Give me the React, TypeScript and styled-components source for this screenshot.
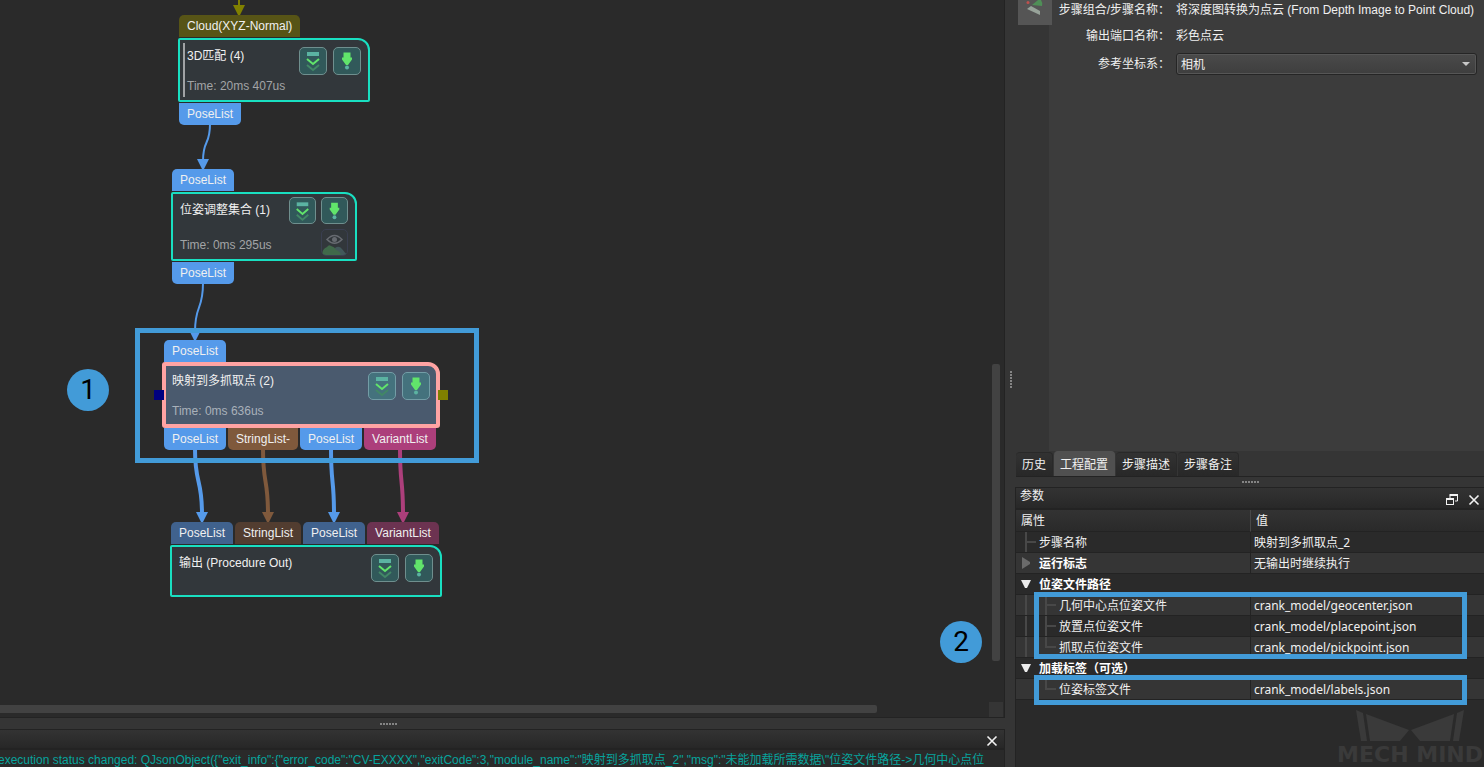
import React from "react";
import styled, { createGlobalStyle, css } from "styled-components";

const uiFont = `"Liberation Sans", "Noto Sans CJK SC", sans-serif`;
const treeFont = `"Noto Sans", "Noto Sans CJK SC", sans-serif`;

const color = {
  canvas: "#2a2a2a",
  frame: "#353535",
  form: "#3c3c3c",
  line: "#232323",
  accent: "#429bd8",
  teal: "#19dfc1",
  blue: "#559aea",
  brown: "#7f593c",
  magenta: "#ac3f7b",
  olive: "#575416",
  oliveWire: "#808000",
  blueDim: "#40628e",
  brownDim: "#523d30",
  magentaDim: "#6c3351",
};

const GlobalStyle = createGlobalStyle`
  *, *::before, *::after { box-sizing: border-box; }
  body { margin: 0; background: ${color.frame}; color: #f0f0f0; font: 12px/20px ${uiFont}; }
  button { font: inherit; color: inherit; padding: 0; border: 0; background: none; }
`;

const Shell = styled.div`
  display: grid;
  grid-template-columns: minmax(0, 1005fr) 11px minmax(0, 468fr);
  height: 100vh;
  background: ${color.frame};
`;

const LeftPane = styled.main`
  display: grid;
  grid-template-rows: minmax(0, 1fr) 11px 38px;
  min-width: 0;
`;

const Workspace = styled.section`
  position: relative;
  display: grid;
  grid-template-columns: minmax(0, 1fr) 14px;
  grid-template-rows: minmax(0, 1fr) 15px;
  padding: 0 1px 0 0;
  background: ${color.canvas};
  border-right: 1px solid ${color.line};
  border-bottom: 1px solid ${color.line};
  overflow: hidden;
`;

const Surface = styled.div`
  position: relative;
  overflow: hidden;
`;

const VerticalBar = styled.div`
  display: flex;
  flex-direction: column;
  align-items: center;
  justify-content: flex-end;
  padding-bottom: 41px;
`;

const VerticalThumb = styled.div`
  width: 8px;
  height: 45%;
  border-radius: 2px;
  background: #424242;
`;

const HorizontalBar = styled.div`
  padding: 3px 112px 0 0;
`;

const HorizontalThumb = styled.div`
  height: 8px;
  border-radius: 0 2px 2px 0;
  background: #424242;
`;

const Corner = styled.div`
  background: ${color.frame};
`;

const Wires = styled.svg`
  position: absolute;
  top: 0;
  left: 0;
  width: 460px;
  height: 620px;
`;

const NodeGroup = styled.article<{ $x: number; $y: number; $width: number }>`
  position: absolute;
  left: ${(p) => p.$x}px;
  top: ${(p) => p.$y}px;
  width: ${(p) => p.$width}px;
  display: flex;
  flex-direction: column;
  gap: 1px;
`;

const PortRow = styled.div<{ $side: "in" | "out"; $selected?: boolean }>`
  display: flex;
  gap: 2px;
  padding-left: ${(p) => (p.$selected ? 2 : 1)}px;
  margin: ${(p) => (p.$selected ? (p.$side === "in" ? "0 0 -1px" : "-1px 0 0") : "0")};
`;

const Port = styled.span<{ $fill: string; $side: "in" | "out" }>`
  height: 22px;
  padding: 0 8px;
  line-height: 22px;
  white-space: nowrap;
  background: ${(p) => p.$fill};
  border-radius: ${(p) => (p.$side === "in" ? "5px 5px 0 0" : "0 0 5px 5px")};
`;

const NodeBody = styled.div<{ $height: number; $selected?: boolean }>`
  position: relative;
  display: flex;
  justify-content: space-between;
  height: ${(p) => p.$height}px;
  padding: 7px 7px 5px 7px;
  border: 2px solid ${color.teal};
  border-radius: 2px 12px 2px 2px;
  background: #32373b;
  ${(p) =>
    p.$selected &&
    css`
      padding: 6px 6px 4px 6px;
      border: 4px solid #ffa3a3;
      border-radius: 3px 12px 3px 3px;
      background: #4a5a6e;
    `}
`;

const NodeText = styled.div`
  display: flex;
  flex-direction: column;
  justify-content: space-between;
  white-space: nowrap;
`;

const NodeTitle = styled.h2`
  margin: 0;
  font-size: 12px;
  line-height: 18px;
  font-weight: 400;
`;

const NodeTime = styled.span<{ $selected?: boolean }>`
  line-height: 18px;
  color: ${(p) => (p.$selected ? "#a9b1ba" : "#a2a4a6")};
`;

const GroupMark = styled.span`
  position: absolute;
  left: 3px;
  top: 3px;
  bottom: 3px;
  width: 2px;
  background: #a0a2a5;
`;

const SidePort = styled.span<{ $side: "left" | "right" }>`
  position: absolute;
  top: 24px;
  ${(p) => p.$side}: -12px;
  width: 10px;
  height: 10px;
  background: ${(p) => (p.$side === "left" ? "#000080" : "#808000")};
`;

const Actions = styled.div<{ $compact?: boolean }>`
  display: grid;
  grid-template-columns: auto auto;
  align-content: start;
  gap: ${(p) => (p.$compact ? 5 : 6)}px;
  margin-top: ${(p) => (p.$compact ? "-4px" : "0")};
`;

const IconButton = styled.button<{ $compact?: boolean; $selected?: boolean; $ghost?: boolean }>`
  display: flex;
  align-items: center;
  justify-content: center;
  width: ${(p) => (p.$compact ? 27 : 28)}px;
  height: ${(p) => (p.$compact ? 27 : 28)}px;
  border: 1px solid ${(p) => (p.$ghost ? "#3a3f50" : p.$selected ? "#739da6" : "#6f8f8e")};
  border-radius: 5px;
  background: ${(p) => (p.$ghost ? "transparent" : p.$selected ? "#44727d" : "#31595a")};
  grid-column: ${(p) => (p.$ghost ? "2" : "auto")};
  overflow: hidden;
`;

const Highlight = styled.div<{ $top: number; $height: number }>`
  position: absolute;
  top: ${(p) => p.$top}px;
  left: 18px;
  right: 17px;
  height: ${(p) => p.$height}px;
  border: 5px solid ${color.accent};
  pointer-events: none;
`;

const NodeHighlight = styled.div`
  position: absolute;
  left: 135px;
  top: 328px;
  width: 344px;
  height: 135px;
  border: 5px solid ${color.accent};
  pointer-events: none;
`;

const Marker = styled.span<{ $top: number; $left?: number; $right?: number }>`
  position: absolute;
  top: ${(p) => p.$top}px;
  ${(p) => (p.$left !== undefined ? `left: ${p.$left}px;` : `right: ${p.$right}px;`)}
  width: 42px;
  height: 42px;
  border-radius: 50%;
  background: ${color.accent};
  color: #000;
  font: 28px/42px Roboto, sans-serif;
  text-align: center;
`;

const Splitter = styled.div<{ $vertical?: boolean; $start?: boolean }>`
  display: flex;
  flex-direction: ${(p) => (p.$vertical ? "column" : "row")};
  align-items: center;
  justify-content: ${(p) => (p.$start ? "flex-start" : "center")};
  gap: 1px;
  ${(p) => p.$start && "padding-left: 380px;"}
  ${(p) => p.$vertical && "padding-bottom: 8px;"}
`;

const Dot = styled.i`
  width: 2px;
  height: 2px;
  background: #858585;
`;

const ConsoleDock = styled.section`
  display: flex;
  flex-direction: column;
  min-width: 0;
  border-right: 1px solid ${color.line};
  border-top: 1px solid ${color.line};
  background: ${color.canvas};
`;

const ConsoleHeader = styled.header`
  display: flex;
  align-items: center;
  justify-content: flex-end;
  flex: none;
  height: 20px;
  padding: 3px 6px 0 0;
  border-bottom: 2px solid ${color.line};
  background: linear-gradient(#333, #272727);
`;

const DockButton = styled.button`
  display: flex;
  width: 12px;
  height: 12px;
`;

const LogLine = styled.p`
  flex: none;
  margin: 0 0 0 -2px;
  line-height: 20px;
  color: #07a49d;
  white-space: nowrap;
  overflow: hidden;
`;

const RightPane = styled.aside`
  display: grid;
  grid-template-rows: minmax(0, 451fr) 26px 10px minmax(280px, 280fr);
  min-width: 0;
`;

const OutputPanel = styled.section`
  display: grid;
  grid-template-columns: 33px minmax(0, 1fr);
  min-height: 0;
`;

const Thumbnail = styled.button`
  position: relative;
  display: block;
  width: 34px;
  height: 25px;
  margin-left: 2px;
  background: #555;
`;

const OutputForm = styled.form`
  display: grid;
  grid-template-columns: 121px minmax(0, 1fr);
  grid-template-rows: 20px 20px 24px;
  gap: 6px;
  align-items: center;
  padding-right: 7px;
  background: ${color.form};
  white-space: nowrap;
`;

const FormLabel = styled.label`
  text-align: right;
`;

const FormOutput = styled.output``;

const SelectBox = styled.div`
  position: relative;
  display: flex;
`;

const Select = styled.select`
  appearance: none;
  width: 100%;
  height: 22px;
  padding: 1px 4px 0;
  border: 1px solid #252525;
  border-radius: 3px;
  box-shadow: inset 0 0 0 1px #565656;
  background: linear-gradient(#4a4a4a, #3e3e3e);
  color: #f0f0f0;
  font: inherit;
`;

const SelectArrow = styled.svg`
  position: absolute;
  right: 7px;
  top: 9px;
  width: 8px;
  height: 4px;
  pointer-events: none;
`;

const Tabs = styled.nav`
  display: flex;
  align-items: flex-end;
  gap: 1px;
  border-bottom: 1px solid ${color.line};
`;

const Tab = styled.button<{ $active?: boolean }>`
  height: ${(p) => (p.$active ? 25 : 24)}px;
  padding: 1px 6px 0;
  line-height: ${(p) => (p.$active ? 22 : 23)}px;
  border: solid #292929;
  border-width: 1px 1px 0 0;
  border-radius: 4px 4px 0 0;
  background: linear-gradient(#323232, #282828);
  white-space: nowrap;
  ${(p) =>
    p.$active &&
    css`
      border-color: #505050;
      background: #505050;
    `}
`;

const ParamDock = styled.section`
  display: flex;
  flex-direction: column;
  min-width: 0;
  margin-left: -1px;
  border-left: 1px solid ${color.line};
  background: ${color.canvas};
`;

const ParamHeader = styled.header`
  display: flex;
  justify-content: space-between;
  flex: none;
  height: 23px;
  padding-left: 4px;
  border-top: 1px solid ${color.line};
  border-bottom: 2px solid ${color.line};
  line-height: 16px;
  background: linear-gradient(#333, #282828);
`;

const DockTitle = styled.h2`
  margin: 0;
  font: inherit;
`;

const DockTools = styled.div`
  display: flex;
  gap: 10px;
  padding: 6px 4px 0 0;
`;

const TreeArea = styled.div`
  position: relative;
  flex: none;
`;

const Tree = styled.table`
  width: 100%;
  table-layout: fixed;
  border-collapse: separate;
  border-spacing: 0;
  font-family: ${treeFont};
  line-height: 19px;
`;

const HeadCell = styled.th`
  height: 22px;
  padding: 0 5px;
  text-align: left;
  font-weight: 400;
  border-bottom: 1px solid ${color.line};
  background: linear-gradient(#333, #2a2a2a);
  & + & {
    border-left: 1px solid #484848;
  }
`;

const TreeRow = styled.tr`
  background: ${color.canvas};
  &:nth-child(even) {
    background: ${color.frame};
  }
`;

const TreeCell = styled.td`
  height: 21px;
  padding: 1px 0 0 3px;
  border-bottom: 1px solid ${color.line};
  white-space: nowrap;
  & + & {
    border-left: 1px solid ${color.line};
  }
`;

const NameCell = styled(TreeCell)<{ $group?: boolean }>`
  padding: 0;
  font-weight: ${(p) => (p.$group ? 700 : 400)};
  color: ${(p) => (p.$group ? "#fff" : "inherit")};
`;

const NameLine = styled.div`
  display: flex;
  align-items: center;
  height: 20px;
`;

const Guide = styled.span<{ $kind: "line" | "tee" | "end" | "none" }>`
  position: relative;
  flex: none;
  width: 20px;
  height: 20px;
  ${(p) =>
    p.$kind !== "none" &&
    css`
      &::before {
        content: "";
        position: absolute;
        left: 9px;
        top: 0;
        width: 2px;
        height: ${p.$kind === "end" ? "11px" : "20px"};
        background: #484848;
      }
    `}
  ${(p) =>
    (p.$kind === "tee" || p.$kind === "end") &&
    css`
      &::after {
        content: "";
        position: absolute;
        left: 11px;
        top: 9px;
        width: 9px;
        height: 2px;
        background: #484848;
      }
    `}
`;

const Toggle = styled.button`
  display: flex;
  align-items: center;
  justify-content: center;
  width: 20px;
  height: 20px;
`;

const NameText = styled.span`
  padding: 2px 0 0 3px;
  line-height: 18px;
`;

const Brand = styled.footer`
  display: flex;
  flex-direction: column;
  align-items: center;
  align-self: flex-end;
  margin-top: auto;
  padding-right: 1px;
  color: #3a3a3a;
  font: 700 22px/25px "DejaVu Sans", sans-serif;
  white-space: nowrap;
`;

const HandleDots = () => (
  <>
    {[0, 1, 2, 3, 4, 5].map((n) => (
      <Dot key={n} />
    ))}
  </>
);

const RunToIcon = () => (
  <svg width="26" height="26" viewBox="1 1 26 26" fill="none">
    <rect x="8" y="5" width="12" height="4" fill="#5bb3a2" />
    <path d="M8 12l6 5 6-5" stroke="#61e46b" strokeWidth="2" />
    <path d="M8 18l6 5 6-5" stroke="#428766" strokeWidth="2" />
  </svg>
);

const RunStepIcon = () => (
  <svg width="26" height="26" viewBox="1 1 26 26">
    <path d="M10.5 5.5h7v5h1.500v2L15 18h-2l-4-5.500v-2h1.500z" fill="#61e46b" />
    <circle cx="14" cy="20.500" r="2" fill="#5bb3a2" />
  </svg>
);

const PreviewIcon = () => (
  <svg width="25" height="25" viewBox="0 0 25 25" fill="none">
    <path d="M5 9.500Q12.500 1.500 20 9.500Q12.500 17 5 9.500z" stroke="#666a70" strokeWidth="1.500" />
    <circle cx="12.500" cy="9.500" r="2.500" fill="#666a70" />
    <path d="M13 18Q17 15 20 19L25 25H13z" fill="#42585a" />
    <path d="M0 25Q0 19 5 17Q7 14 9 16Q13 17 14 20Q18 21 19 25z" fill="#40694a" />
  </svg>
);

const CloseIcon = () => (
  <svg width="12" height="12" viewBox="0 0 12 12" stroke="#f2f2f2" strokeWidth="1.600">
    <path d="M1.500 1.500l9 9M10.500 1.500l-9 9" />
  </svg>
);

const RestoreIcon = () => (
  <svg width="12" height="12" viewBox="0 0 12 12" fill="none" stroke="#f2f2f2">
    <path d="M4 4V1.500h7.500V7H9" />
    <path d="M3.500 1h8.500" strokeWidth="2" />
    <rect x="0.500" y="4.500" width="7" height="6" />
    <path d="M0 5h8" strokeWidth="2" />
  </svg>
);

type PortInfo = [label: string, fill: string];

interface StepProps {
  x: number;
  y: number;
  width: number;
  height: number;
  title: string;
  time?: string;
  inputs: PortInfo[];
  outputs?: PortInfo[];
  selected?: boolean;
  compact?: boolean;
  marked?: boolean;
  preview?: boolean;
}

const Step = ({ x, y, width, height, title, time, inputs, outputs, selected, compact, marked, preview }: StepProps) => (
  <NodeGroup $x={x} $y={y} $width={width}>
    <PortRow $side="in" $selected={selected}>
      {inputs.map(([label, fill], i) => (
        <Port key={i} $side="in" $fill={fill}>{label}</Port>
      ))}
    </PortRow>
    <NodeBody $height={height} $selected={selected}>
      {marked && <GroupMark />}
      {selected && <SidePort $side="left" />}
      {selected && <SidePort $side="right" />}
      <NodeText>
        <NodeTitle>{title}</NodeTitle>
        {time && <NodeTime $selected={selected}>{time}</NodeTime>}
      </NodeText>
      <Actions $compact={compact}>
        <IconButton type="button" aria-label="Run to step" $compact={compact} $selected={selected}>
          <RunToIcon />
        </IconButton>
        <IconButton type="button" aria-label="Run step" $compact={compact} $selected={selected}>
          <RunStepIcon />
        </IconButton>
        {preview && (
          <IconButton type="button" aria-label="Preview" $compact $ghost>
            <PreviewIcon />
          </IconButton>
        )}
      </Actions>
    </NodeBody>
    {outputs && (
      <PortRow $side="out" $selected={selected}>
        {outputs.map(([label, fill], i) => (
          <Port key={i} $side="out" $fill={fill}>{label}</Port>
        ))}
      </PortRow>
    )}
  </NodeGroup>
);

interface Wire {
  from: [number, number];
  to: [number, number];
  stroke: string;
  width: number;
}

const wires: Wire[] = [
  { from: [239, -20], to: [239, 15], stroke: color.oliveWire, width: 2 },
  { from: [210, 124], to: [203, 169], stroke: color.blue, width: 2 },
  { from: [203, 283], to: [195, 340], stroke: color.blue, width: 2 },
  { from: [195, 449], to: [202, 522], stroke: color.blue, width: 4 },
  { from: [263, 449], to: [268, 522], stroke: color.brown, width: 4 },
  { from: [331, 449], to: [334, 522], stroke: color.blue, width: 4 },
  { from: [400, 449], to: [403, 522], stroke: color.magenta, width: 4 },
];

const WireLayer = () => (
  <Wires viewBox="0 0 460 620" aria-hidden="true">
    {wires.map(({ from: [x1, y1], to: [x2, y2], stroke, width }, i) => {
      const end = y2 - 8;
      const mid = (y1 + end) / 2;
      return (
        <g key={i}>
          <path d={`M${x1} ${y1}C${x1} ${mid + 4} ${x2} ${mid - 4} ${x2} ${end}`} fill="none" stroke={stroke} strokeWidth={width} />
          <path d={`M${x2 - 6} ${y2 - 10}h12l-5 10h-2z`} fill={stroke} />
        </g>
      );
    })}
  </Wires>
);

type GuideKind = "line" | "tee" | "end" | "none";

interface Param {
  name: string;
  value?: string;
  guides?: GuideKind[];
  group?: "open" | "closed";
}

const params: Param[] = [
  { name: "步骤名称", value: "映射到多抓取点_2", guides: ["tee"] },
  { name: "运行标志", value: "无输出时继续执行", group: "closed" },
  { name: "位姿文件路径", group: "open" },
  { name: "几何中心点位姿文件", value: "crank_model/geocenter.json", guides: ["line", "tee"] },
  { name: "放置点位姿文件", value: "crank_model/placepoint.json", guides: ["line", "tee"] },
  { name: "抓取点位姿文件", value: "crank_model/pickpoint.json", guides: ["line", "end"] },
  { name: "加载标签（可选）", group: "open" },
  { name: "位姿标签文件", value: "crank_model/labels.json", guides: ["none", "end"] },
];

const ParamRow = ({ name, value, guides = [], group }: Param) => (
  <TreeRow>
    <NameCell $group={!!group} colSpan={value ? 1 : 2}>
      <NameLine>
        {guides.map((kind, i) => (
          <Guide key={i} $kind={kind} />
        ))}
        {group && (
          <Toggle type="button" aria-label={name} aria-expanded={group === "open"}>
            <svg width="12" height="12" viewBox="0 0 12 12">
              {group === "open" ? <path d="M1 2h10l-4 8H5z" fill="#ececec" /> : <path d="M2 0l8 5v2l-8 5z" fill="#6b6b6b" />}
            </svg>
          </Toggle>
        )}
        <NameText>{name}</NameText>
      </NameLine>
    </NameCell>
    {value && <TreeCell>{value}</TreeCell>}
  </TreeRow>
);

export default function App() {
  return (
    <>
      <GlobalStyle />
      <Shell>
        <LeftPane>
          <Workspace>
            <Surface>
              <WireLayer />
              <Step x={178} y={15} width={192} height={64} title="3D匹配 (4)" time="Time: 20ms 407us" marked
                inputs={[["Cloud(XYZ-Normal)", color.olive]]} outputs={[["PoseList", color.blue]]} />
              <Step x={171} y={169} width={186} height={69} title="位姿调整集合 (1)" time="Time: 0ms 295us" compact preview
                inputs={[["PoseList", color.blue]]} outputs={[["PoseList", color.blue]]} />
              <Step x={162} y={340} width={278} height={66} title="映射到多抓取点 (2)" time="Time: 0ms 636us" selected
                inputs={[["PoseList", color.blue]]}
                outputs={[["PoseList", color.blue], ["StringList-", color.brown], ["PoseList", color.blue], ["VariantList", color.magenta]]} />
              <Step x={170} y={522} width={272} height={52} title="输出 (Procedure Out)"
                inputs={[["PoseList", color.blueDim], ["StringList", color.brownDim], ["PoseList", color.blueDim], ["VariantList", color.magentaDim]]} />
              <NodeHighlight />
              <Marker $top={369} $left={67}>1</Marker>
            </Surface>
            <VerticalBar><VerticalThumb /></VerticalBar>
            <HorizontalBar><HorizontalThumb /></HorizontalBar>
            <Corner />
            <Marker $top={621} $right={22}>2</Marker>
          </Workspace>
          <Splitter $start><HandleDots /></Splitter>
          <ConsoleDock>
            <ConsoleHeader>
              <DockButton type="button" aria-label="Close log"><CloseIcon /></DockButton>
            </ConsoleHeader>
            <LogLine>{`execution status changed: QJsonObject({"exit_info":{"error_code":"CV-EXXXX","exitCode":3,"module_name":"映射到多抓取点_2","msg":"未能加载所需数据\\"位姿文件路径->几何中心点位`}</LogLine>
          </ConsoleDock>
        </LeftPane>

        <Splitter $vertical><HandleDots /></Splitter>

        <RightPane>
          <OutputPanel>
            <Thumbnail type="button" aria-label="Point cloud">
              <svg width="34" height="25" viewBox="0 0 34 25">
                <circle cx="10" cy="2.500" r="1.500" fill="#c0504d" />
                <path d="M14 5L20 0h3q2 3 1 6z" fill="#4f8f57" />
                <path d="M9 9l4-3 9 5v4z" fill="#98a39a" />
              </svg>
            </Thumbnail>
            <OutputForm>
              <FormLabel htmlFor="step-name">步骤组合/步骤名称：</FormLabel>
              <FormOutput id="step-name">将深度图转换为点云 (From Depth Image to Point Cloud)</FormOutput>
              <FormLabel htmlFor="port-name">输出端口名称：</FormLabel>
              <FormOutput id="port-name">彩色点云</FormOutput>
              <FormLabel htmlFor="frame">参考坐标系：</FormLabel>
              <SelectBox>
                <Select id="frame" defaultValue="camera">
                  <option value="camera">相机</option>
                </Select>
                <SelectArrow viewBox="0 0 8 4"><path d="M0 0h8L4 4z" fill="#c8c8c8" /></SelectArrow>
              </SelectBox>
            </OutputForm>
          </OutputPanel>
          <Tabs>
            <Tab type="button">历史</Tab>
            <Tab type="button" $active>工程配置</Tab>
            <Tab type="button">步骤描述</Tab>
            <Tab type="button">步骤备注</Tab>
          </Tabs>
          <Splitter><HandleDots /></Splitter>
          <ParamDock>
            <ParamHeader>
              <DockTitle>参数</DockTitle>
              <DockTools>
                <DockButton type="button" aria-label="Float"><RestoreIcon /></DockButton>
                <DockButton type="button" aria-label="Close"><CloseIcon /></DockButton>
              </DockTools>
            </ParamHeader>
            <TreeArea>
              <Tree>
                <thead>
                  <tr>
                    <HeadCell scope="col">属性</HeadCell>
                    <HeadCell scope="col">值</HeadCell>
                  </tr>
                </thead>
                <tbody>
                  {params.map((p) => (
                    <ParamRow key={p.name} {...p} />
                  ))}
                </tbody>
              </Tree>
              <Highlight $top={82} $height={67} />
              <Highlight $top={165} $height={30} />
            </TreeArea>
            <Brand>
              <svg width="108" height="32" viewBox="0 0 108 32" fill="#3a3a3a" aria-hidden="true">
                <path d="M0 0l7 3 4 28H5z" />
                <path d="M10 4l43 16-9 11H14z" />
                <path d="M108 0l-7 3-4 28h6z" />
                <path d="M98 4L55 20l9 11h30z" />
              </svg>
              MECH MIND
            </Brand>
          </ParamDock>
        </RightPane>
      </Shell>
    </>
  );
}
